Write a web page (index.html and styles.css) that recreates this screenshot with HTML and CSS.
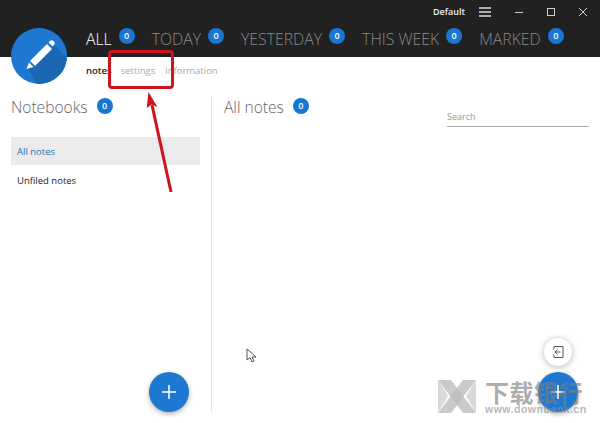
FILE: index.html

```html
<!DOCTYPE html>
<html lang="en">
<head>
  <meta charset="UTF-8" />
  <title>Notes</title>
  <link rel="stylesheet" href="styles.css">
</head>
<body>
  <div class="app">
    <header class="top">
      <div class="titlebar">
        <span class="profile">Default</span>
        <svg class="win-icon" width="14" height="12" viewBox="0 0 14 12"><path d="M1 2h12M1 6h12M1 10h12" stroke="#ddd" stroke-width="1.300"/></svg>
        <svg class="win-icon" width="10" height="10" viewBox="0 0 10 10"><path d="M1 5.500h8" stroke="#ccc" stroke-width="1"/></svg>
        <svg class="win-icon" width="10" height="10" viewBox="0 0 10 10"><rect x="1.500" y="1.500" width="7" height="7" fill="none" stroke="#ccc" stroke-width="1"/></svg>
        <svg class="win-icon" width="10" height="10" viewBox="0 0 10 10"><path d="M1 1l8 8M9 1l-8 8" stroke="#ccc" stroke-width="1"/></svg>
      </div>
      <nav class="tabs">
        <a class="tab active">ALL <span class="badge">0</span></a>
        <a class="tab">TODAY <span class="badge">0</span></a>
        <a class="tab">YESTERDAY <span class="badge">0</span></a>
        <a class="tab">THIS WEEK <span class="badge">0</span></a>
        <a class="tab">MARKED <span class="badge">0</span></a>
      </nav>
    </header>

    <div class="logo">
      <svg width="56" height="56" viewBox="0 0 56 56">
        <path d="M16 39L41 14L56 30V40L38 56H26Z" fill="#1a68b4"/>
        <path d="M19 33L36 16L41 21L24 38Z" fill="#fff"/>
        <path d="M37.500 14.500L39 13C40 12 41.500 12 42.500 13L43 13.500C44 14.500 44 16 43 17L41.500 18.500Z" fill="#fff"/>
        <path d="M18 34.500L22.500 39L15.500 41Z" fill="#fff"/>
      </svg>
    </div>

    <nav class="subtabs">
      <a class="subtab active">notes</a>
      <a class="subtab">settings</a>
      <a class="subtab">information</a>
    </nav>

    <main class="content">
      <aside class="sidebar">
        <h2 class="heading">Notebooks <span class="badge">0</span></h2>
        <ul class="books">
          <li class="book selected">All notes</li>
          <li class="book">Unfiled notes</li>
        </ul>
      </aside>
      <section class="notes">
        <h2 class="heading">All notes <span class="badge">0</span></h2>
        <div class="search">Search</div>
      </section>
    </main>
  </div>

  <button class="fab fab-left">
    <svg width="16" height="16" viewBox="0 0 16 16"><path d="M8 1v14M1 8h14" stroke="#fff" stroke-width="1.500"/></svg>
  </button>
  <button class="fab fab-right">
    <svg width="16" height="16" viewBox="0 0 16 16"><path d="M8 1v14M1 8h14" stroke="#fff" stroke-width="1.500"/></svg>
  </button>
  <button class="fab-small">
    <svg width="14" height="14" viewBox="0 0 14 14" fill="none" stroke="#555" stroke-width="1"><path d="M3 4.500V1.500h9v11H3v-3"/><path d="M9.500 7H4M6.500 4.500L4 7l2.500 2.500"/></svg>
  </button>

  <!-- screenshot annotation -->
  <div class="mark-box"></div>
  <svg class="mark-arrow" width="40" height="110" viewBox="0 0 40 110">
    <path d="M28 102L9 15" stroke="#d0121c" stroke-width="3" fill="none"/>
    <path d="M5.500 2L3.700 18L8.700 14.500L14.500 17Z" fill="#d0121c"/>
  </svg>

  <svg class="cursor" width="12" height="16" viewBox="0 0 12 16"><path d="M1 1v11l3-2.500 2 4.500 2-1-2-4h4Z" fill="#fff" stroke="#555" stroke-width="1"/></svg>

  <!-- watermark -->
  <div class="watermark">
    <svg width="38" height="33" viewBox="0 0 38 33">
      <path d="M0 0H13L38 33H25Z" fill="#bdbdbd" opacity=".8"/>
      <path d="M38 0H25L0 33H13Z" fill="#bdbdbd" opacity=".8"/>
      <path d="M0 0L10 16L0 33ZM38 0L28 16L38 33Z" fill="#cfcfcf" opacity=".8"/>
    </svg>
    <div class="wm-text">
      <div class="wm-name">下载银行</div>
      <div class="wm-url">www.downbank.cn</div>
    </div>
  </div>
</body>
</html>
```

FILE: styles.css

```css
* {
  box-sizing: border-box;
}
html, body {
  margin: 0;
  height: 100%;
}
body {
  font-family: "Open Sans", sans-serif;
  background: #fff;
  overflow: hidden;
}
.app {
  width: 600px;
  height: 423px;
  display: flex;
  flex-direction: column;
}
.top {
  height: 57px;
  background: #212121;
  color: #fff;
}
.titlebar {
  height: 23px;
  display: flex;
  align-items: center;
  justify-content: flex-end;
  padding-right: 12px;
  gap: 22px;
}
.profile {
  font-size: 9px;
  font-weight: 600;
  color: #eee;
  margin-right: -8px;
  position: relative;
  left: 1px;
}
.win-icon {
  display: block;
}
.tabs {
  display: flex;
  padding-left: 86px;
  gap: 17px;
  height: 34px;
}
.tab {
  font-size: 15.800px;
  font-weight: 300;
  color: #8a8a8a;
  line-height: 33px;
  display: flex;
  align-items: flex-start;
  gap: 7px;
  white-space: nowrap;
}
.tab.active {
  color: #fff;
}
.tab .badge {
  margin-top: 5px;
}
.badge {
  display: inline-block;
  width: 16px;
  height: 16px;
  line-height: 16px;
  border-radius: 50%;
  background: #1976d2;
  color: #fff;
  font-size: 9px;
  font-weight: 600;
  text-align: center;
}
.logo {
  position: absolute;
  left: 11px;
  top: 28px;
  width: 56px;
  height: 56px;
  border-radius: 50%;
  background: #1e78d2;
  overflow: hidden;
}
.logo svg {
  display: block;
}
.subtabs {
  display: flex;
  gap: 10px;
  padding-left: 86px;
  height: 28px;
  padding-bottom: 2px;
  align-items: center;
}
.subtab {
  font-size: 9.500px;
  color: #aaa;
}
.subtab.active {
  color: #222;
  font-weight: 600;
  margin-right: -1px;
}
.content {
  flex: 1;
  display: flex;
  margin-top: 12px;
  margin-bottom: 11px;
}
.sidebar {
  width: 212px;
  padding: 0 11px;
  border-right: 1px solid #e2e2e2;
}
.heading {
  margin: 0;
  font-size: 15.600px;
  font-weight: 300;
  color: #666;
  line-height: 20px;
  height: 24px;
  display: flex;
  align-items: flex-start;
  gap: 9px;
  white-space: nowrap;
}
.heading .badge {
  margin-top: 1px;
}
.books {
  list-style: none;
  margin: 16px 0 0;
  padding: 0;
  width: 189px;
}
.book {
  height: 28px;
  line-height: 29px;
  padding-left: 6px;
  font-size: 9.500px;
  color: #222;
}
.book + .book {
  line-height: 31px;
}
.book.selected {
  background: #ebebeb;
  color: #1f6fbd;
}
.notes {
  position: relative;
  flex: 1;
  padding-left: 12px;
}
.search {
  position: absolute;
  left: 235px;
  top: 13px;
  width: 142px;
  height: 17px;
  border-bottom: 1px solid #aaa;
  font-size: 9px;
  color: #999;
  line-height: 13px;
}
.fab {
  position: absolute;
  top: 372px;
  width: 40px;
  height: 40px;
  border: none;
  border-radius: 50%;
  background: #1e78d2;
  box-shadow: 0 2px 5px rgba(0,0,0,0.3);
  display: flex;
  align-items: center;
  justify-content: center;
  padding: 0;
}
.fab-left {
  left: 149px;
}
.fab-right {
  left: 538px;
}
.fab-small {
  position: absolute;
  left: 544px;
  top: 338px;
  width: 28px;
  height: 28px;
  border: none;
  border-radius: 50%;
  background: #fff;
  box-shadow: 0 1px 6px rgba(0,0,0,0.3);
  display: flex;
  align-items: center;
  justify-content: center;
  padding: 0;
}
.mark-box {
  position: absolute;
  left: 108px;
  top: 50px;
  width: 66px;
  height: 39px;
  border: 3px solid #cc1520;
  border-radius: 4px;
}
.mark-arrow {
  position: absolute;
  left: 143px;
  top: 90px;
}
.cursor {
  position: absolute;
  left: 246px;
  top: 348px;
}
.watermark {
  position: absolute;
  left: 438px;
  top: 380px;
  display: flex;
  gap: 9px;
}
.wm-text {
  width: 100px;
}
.wm-name {
  font-family: "Noto Sans CJK SC", sans-serif;
  font-size: 24px;
  font-weight: 700;
  line-height: 24px;
  letter-spacing: 0.500px;
  color: rgba(125,125,125,0.65);
}
.wm-url {
  font-family: "Liberation Sans", sans-serif;
  font-size: 10.500px;
  font-weight: 700;
  letter-spacing: 0.500px;
  line-height: 10px;
  color: rgba(140,140,140,0.65);
}
```
